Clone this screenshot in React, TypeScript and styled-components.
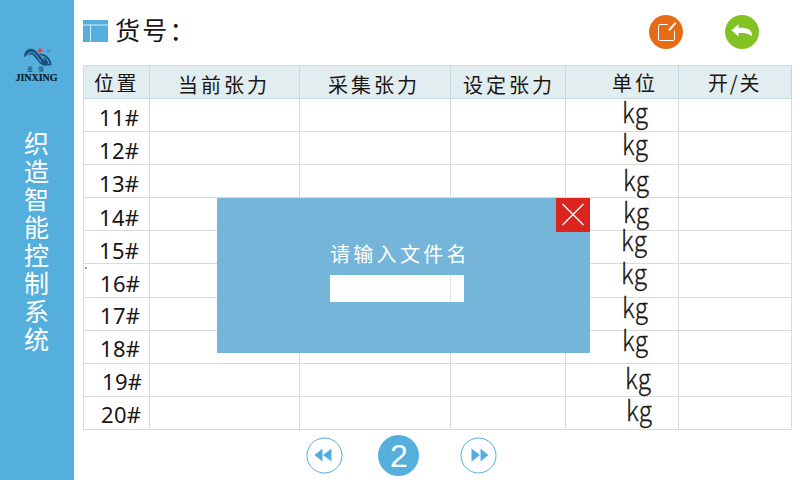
import React from "react";
import styled, { createGlobalStyle } from "styled-components";

const GlobalStyle = createGlobalStyle`
  * { box-sizing: border-box; }
  body {
    margin: 0;
    background: #fff;
    overflow: hidden;
    font-family: "Noto Sans CJK SC", sans-serif;
    color: #1a1614;
  }
`;

const Screen = styled.div`
  width: 800px;
  height: 480px;
  display: flex;
  position: relative;
  background: #fff;
`;

const Sidebar = styled.aside`
  width: 74px;
  flex: none;
  background: #54afdc;
  display: flex;
  flex-direction: column;
  align-items: center;
  padding-top: 45px;
`;

const Logo = styled.div`
  display: flex;
  flex-direction: column;
  align-items: center;
  height: 40px;
`;

const LogoChars = styled.div`
  display: flex;
  gap: 5px;
  font-size: 6px;
  line-height: 6px;
  margin-top: -3px;
  margin-right: 3px;
  color: #17405f;
`;

const LogoName = styled.div`
  font: bold 10px/10px "Liberation Serif", serif;
  color: #0c1d2b;
  margin-top: 1px;
  margin-right: 1px;
  -webkit-text-stroke: 0.2px #0c1d2b;
`;

const SystemName = styled.h1`
  margin: 43px 1px 0 0;
  width: 25px;
  font-size: 25px;
  font-weight: 400;
  line-height: 28px;
  color: #fff;
  word-break: break-all;
`;

const Main = styled.main`
  flex: 1;
  display: flex;
  flex-direction: column;
  padding-left: 9px;
`;

const Header = styled.header`
  height: 65px;
  display: flex;
  align-items: flex-start;
`;

const HeaderTitle = styled.h2`
  margin: 11px 0 0 7px;
  width: 534px;
  font-size: 25px;
  line-height: 36px;
  font-weight: 400;
  letter-spacing: 2.2px;
  white-space: nowrap;
`;

const PanelIcon = styled.svg`
  margin-top: 20px;
  width: 25px;
  height: 22px;
  flex: none;
`;

const RoundButton = styled.button<{ $color: string; $gap?: number }>`
  width: 34px;
  height: 34px;
  margin: 15px 0 0 ${(p) => p.$gap ?? 0}px;
  padding: 0;
  border: 0;
  border-radius: 50%;
  flex: none;
  background: ${(p) => p.$color};
  svg { display: block; width: 34px; height: 34px; }
`;

const Table = styled.div`
  width: 709px;
  border-left: 1px solid #d5dadc;
  border-top: 1px solid #d5e0e3;
`;

const Row = styled.div<{ $head?: boolean }>`
  display: grid;
  grid-template-columns: 66px 150px 151px 115px 113px 113px;
  height: ${(p) => (p.$head ? 33 : 33.1)}px;
  background: ${(p) => (p.$head ? "#e1edef" : "transparent")};
`;

const Cell = styled.div<{ $head?: boolean }>`
  border-right: 1px solid ${(p) => (p.$head ? "#c6d9e0" : "#d8dbdd")};
  border-bottom: 1px solid ${(p) => (p.$head ? "#c6d9e0" : "#d8dbdd")};
  white-space: nowrap;
`;

const HeadText = styled.div<{ $left: number; $top: number; $spacing?: number }>`
  padding-left: ${(p) => p.$left}px;
  padding-top: ${(p) => p.$top}px;
  font-size: 20px;
  line-height: 24px;
  letter-spacing: ${(p) => p.$spacing ?? 3}px;
`;

const PositionText = styled.div<{ $left: number; $top: number }>`
  margin-left: ${(p) => p.$left}px;
  margin-top: ${(p) => p.$top}px;
  font: 400 22px/24px "Noto Sans", sans-serif;
  letter-spacing: 0.3px;
`;

const UnitText = styled.div<{ $left: number; $top: number }>`
  width: max-content;
  margin-left: ${(p) => p.$left}px;
  padding-top: ${(p) => p.$top}px;
  font-size: 27px;
  line-height: 18px;
  font-weight: 300;
  letter-spacing: 0.5px;
  -webkit-text-stroke: 0.3px #1a1614;
  transform: scaleX(0.9);
  transform-origin: left;
`;

const Pager = styled.nav`
  display: flex;
  align-items: center;
  margin: 5px 0 0 223.3px;
  height: 42px;
`;

const StepButton = styled.button`
  width: 37px;
  height: 37px;
  padding: 0;
  border: 0;
  background: none;
  svg { display: block; }
`;

const PageNumber = styled.div`
  width: 41px;
  height: 41px;
  margin: 0 40.3px 0 35.2px;
  border-radius: 50%;
  background: #54afdc;
  color: #fff;
  text-align: center;
  font: 400 32px/42px "Liberation Sans", sans-serif;
`;

const Dialog = styled.section`
  position: absolute;
  left: 217px;
  top: 198px;
  width: 373.3px;
  height: 154.7px;
  background: #75b5da;
`;

const DialogTitle = styled.label`
  display: block;
  margin: 42px 0 0 113px;
  height: 35px;
  color: #fff;
  font-size: 20px;
  line-height: 28px;
  letter-spacing: 3.3px;
`;

const DialogInput = styled.div`
  width: 134px;
  height: 27px;
  margin-left: 113.3px;
  background: linear-gradient(#dde6ea, #dde6ea) 120px 0 / 1px 100% no-repeat #fff;
`;

const CloseButton = styled.button`
  position: absolute;
  top: 0;
  right: 0;
  width: 34px;
  height: 34px;
  padding: 0;
  border: 0;
  background: #dc241f;
  svg { display: block; }
`;

const Speck = styled.i`
  position: absolute;
  left: 85px;
  top: 267px;
  width: 2px;
  height: 2px;
  background: #999;
`;

const columns = [
  { name: "位置", left: 10, top: 5, spacing: 2.6 },
  { name: "当前张力", left: 28, top: 7 },
  { name: "采集张力", left: 28, top: 7 },
  { name: "设定张力", left: 12, top: 7 },
  { name: "单位", left: 46, top: 5 },
  { name: "开/关", left: 29, top: 5, spacing: 1.8 },
];

const rows = [
  { no: 11, x: 15, y: 6, ux: 56, uy: 4 },
  { no: 12, x: 15, y: 6, ux: 56, uy: 3 },
  { no: 13, x: 15, y: 6, ux: 57, uy: 6 },
  { no: 14, x: 15, y: 7, ux: 57, uy: 5 },
  { no: 15, x: 15, y: 7, ux: 55, uy: 0 },
  { no: 16, x: 16, y: 7, ux: 55, uy: 0 },
  { no: 17, x: 16, y: 5, ux: 56, uy: 0 },
  { no: 18, x: 16, y: 5, ux: 56, uy: 0 },
  { no: 19, x: 18, y: 5, ux: 59, uy: 5 },
  { no: 20, x: 17, y: 5, ux: 60, uy: 4 },
];

export default function App() {
  return (
    <>
      <GlobalStyle />
      <Screen>
        <Sidebar>
          <Logo>
            <svg width="34" height="24" viewBox="0 0 34 24">
              <path d="M4 12C4 5 11 1 16 6l7 8c3 4 3 5 7 6-6 2-9 0-12-4l-5-6c-4-1-5 0-9 2z" fill="#17517f" />
              <path d="M6.500 10.500c3-4 7-4 9.500-.5l5 7" stroke="#68b3dc" strokeWidth=".9" fill="none" />
              <path d="M19 9c6-1 12 4 12.500 11-3 1-6-1-8-4 2 0 1-4-4.500-7z" fill="#17517f" />
              <path d="M22 11c4 1 6 4 7 8" stroke="#68b3dc" strokeWidth=".9" fill="none" />
              <path d="M20 3v5M17.500 5.500h5" stroke="#dc3b50" strokeWidth="1.300" />
              <circle cx="28.500" cy="6" r="1.200" fill="none" stroke="#477f9f" strokeWidth=".7" />
            </svg>
            <LogoChars><span>金</span><span>信</span></LogoChars>
            <LogoName>JINXING</LogoName>
          </Logo>
          <SystemName>织造智能控制系统</SystemName>
        </Sidebar>
        <Main>
          <Header>
            <PanelIcon viewBox="0 0 25 22">
              <path d="M0 0h25v22H0z" fill="#54afdc" />
              <path d="M0 5h25M7.500 5v17" stroke="#d9eef8" strokeWidth="1" />
            </PanelIcon>
            <HeaderTitle>货号：</HeaderTitle>
            <RoundButton $color="#e56b16" aria-label="编辑">
              <svg viewBox="0 0 34 34" fill="none" stroke="#fff" strokeLinecap="round">
                <path d="M18.500 9.500H11q-1.500 0-1.500 1.500v13q0 1.500 1.500 1.500h13q1.500 0 1.500-1.500v-8" strokeWidth="1" />
                <path d="M20.500 14.800l4-4.500" strokeWidth="2.100" />
                <path d="M25.500 9.200l.8-.9" strokeWidth="2" />
              </svg>
            </RoundButton>
            <RoundButton $color="#82c222" $gap={42} aria-label="返回">
              <svg viewBox="0 0 34 34">
                <path d="M6.500 15.300L13.500 9.300v3.400c9-.2 14 1.500 13.500 8.600-3-3-7-3.500-13.500-3.200v3.400z" fill="#fff" />
              </svg>
            </RoundButton>
          </Header>
          <Table>
            <Row $head>
              {columns.map((c) => (
                <Cell $head key={c.name}>
                  <HeadText $left={c.left} $top={c.top} $spacing={c.spacing}>{c.name}</HeadText>
                </Cell>
              ))}
            </Row>
            {rows.map((r) => (
              <Row key={r.no}>
                <Cell><PositionText $left={r.x} $top={r.y}>{r.no}#</PositionText></Cell>
                <Cell />
                <Cell />
                <Cell />
                <Cell><UnitText $left={r.ux} $top={r.uy}>kg</UnitText></Cell>
                <Cell />
              </Row>
            ))}
          </Table>
          <Pager>
            <StepButton aria-label="上一页">
              <svg width="37" height="37" viewBox="0 0 37 37">
                <circle cx="18.500" cy="18.500" r="17.500" fill="none" stroke="#54afdc" />
                <path d="M8.500 18l8-6.500v13zM17 18l8.500-6.500v13z" fill="#54afdc" />
              </svg>
            </StepButton>
            <PageNumber>2</PageNumber>
            <StepButton aria-label="下一页">
              <svg width="37" height="37" viewBox="0 0 37 37">
                <circle cx="18.500" cy="18.500" r="17.500" fill="none" stroke="#54afdc" />
                <path d="M11.500 11.500l8.500 6.500-8.500 6.500zM20.500 11.500l8 6.500-8 6.500z" fill="#54afdc" />
              </svg>
            </StepButton>
          </Pager>
        </Main>
        <Speck />
        <Dialog role="dialog">
          <DialogTitle>请输入文件名</DialogTitle>
          <DialogInput />
          <CloseButton aria-label="关闭">
            <svg width="34" height="34" viewBox="0 0 34 34">
              <path d="M6.500 6l21 21M27.500 6l-21 21" stroke="#fff" strokeWidth="1.400" />
            </svg>
          </CloseButton>
        </Dialog>
      </Screen>
    </>
  );
}
